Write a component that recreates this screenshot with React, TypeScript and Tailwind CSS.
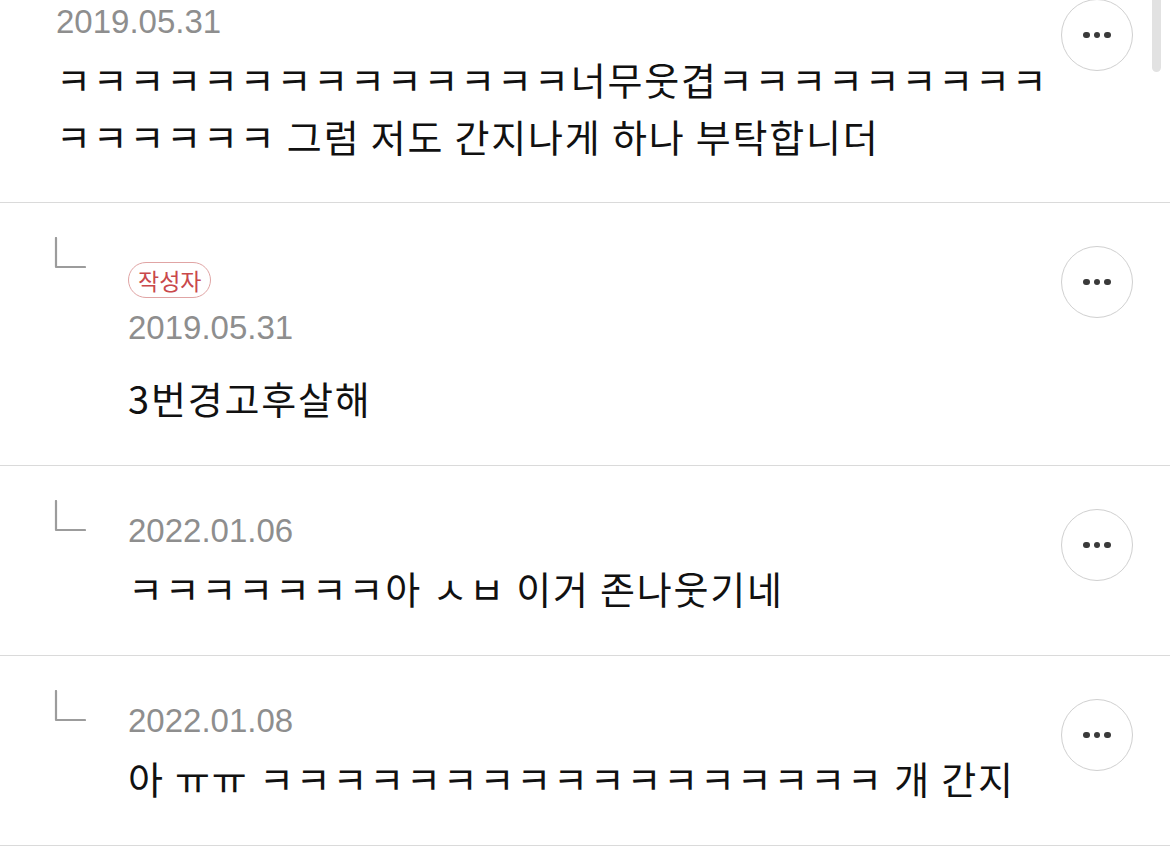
import React from 'react';

type Comment = {
  id: number;
  date: string;
  text: string;
  reply?: boolean;
  author?: boolean;
};

const comments: Comment[] = [
  {
    id: 1,
    date: '2019.05.31',
    text: 'ㅋㅋㅋㅋㅋㅋㅋㅋㅋㅋㅋㅋㅋㅋ너무웃겹ㅋㅋㅋㅋㅋㅋㅋㅋㅋㅋㅋㅋㅋㅋㅋ 그럼 저도 간지나게 하나 부탁합니더',
  },
  { id: 2, date: '2019.05.31', text: '3번경고후살해', reply: true, author: true },
  { id: 3, date: '2022.01.06', text: 'ㅋㅋㅋㅋㅋㅋㅋ아 ㅅㅂ 이거 존나웃기네', reply: true },
  { id: 4, date: '2022.01.08', text: '아 ㅠㅠ ㅋㅋㅋㅋㅋㅋㅋㅋㅋㅋㅋㅋㅋㅋㅋㅋㅋ 개 간지', reply: true },
];

const korean = { fontFamily: '"Noto Sans CJK KR", "Noto Sans", sans-serif' };
const latin = { fontFamily: '"Liberation Sans", Arial, sans-serif' };

function ReplyMark() {
  return (
    <svg width="32" height="32" viewBox="0 0 32 32" fill="none" className="block">
      <path d="M2 1V30H31" stroke="#9c9c9c" strokeWidth="2.2" strokeLinecap="round" strokeLinejoin="round" />
    </svg>
  );
}

function MoreButton({ className = '' }: { className?: string }) {
  return (
    <button className={`w-[72px] h-[72px] shrink-0 rounded-full border-[1.5px] border-[#d0d0d0] bg-white flex items-center justify-center gap-[4px] ${className}`}>
      <span className="w-[6.5px] h-[6.5px] rounded-full bg-[#3a3a3a]" />
      <span className="w-[6.5px] h-[6.5px] rounded-full bg-[#3a3a3a]" />
      <span className="w-[6.5px] h-[6.5px] rounded-full bg-[#3a3a3a]" />
    </button>
  );
}

function CommentRow({ c }: { c: Comment }) {
  if (!c.reply) {
    return (
      <div className="flex items-start border-b border-[#dadada] pl-[56px] pr-[37px] pb-[38px]">
        <div className="flex-1">
          <div className="mt-[2px] text-[33px] leading-[40px] text-[#8e8e8e]" style={latin}>{c.date}</div>
          <p className="mt-[8px] max-w-[1000px] text-[38px] leading-[57px] tracking-[1.8px] text-[#111]" style={korean}>{c.text}</p>
        </div>
        <MoreButton className="-mt-px" />
      </div>
    );
  }

  return (
    <div className="flex items-start border-b border-[#dadada] pl-[54px] pr-[37px] pt-[34px] pb-[39px]">
      <div className="w-[74px] shrink-0">
        <ReplyMark />
      </div>
      <div className="flex-1">
        {c.author && (
          <div className="mt-[25px] mb-[10px] w-fit h-[36px] px-[9px] rounded-full border-[1.5px] border-[#e0a4a4] flex items-center text-[23px] text-[#c9484b]" style={korean}>
            작성자
          </div>
        )}
        <div className={`${c.author ? '' : 'mt-[11px]'} text-[33px] leading-[40px] text-[#8e8e8e]`} style={latin}>{c.date}</div>
        <p className={`${c.author ? 'mt-[21px]' : 'mt-[8px]'} text-[38px] leading-[57px] tracking-[1.8px] text-[#111]`} style={korean}>{c.text}</p>
      </div>
      <MoreButton className="mt-[9px]" />
    </div>
  );
}

export default function App() {
  return (
    <div className="relative w-[1170px] h-[856px] bg-white overflow-hidden">
      {comments.map(c => (
        <CommentRow key={c.id} c={c} />
      ))}
      {/* scroll indicator */}
      <div className="absolute top-0 right-[9px] w-[9px] h-[72px] rounded-b-full bg-[#e2e2e2]" />
    </div>
  );
}
